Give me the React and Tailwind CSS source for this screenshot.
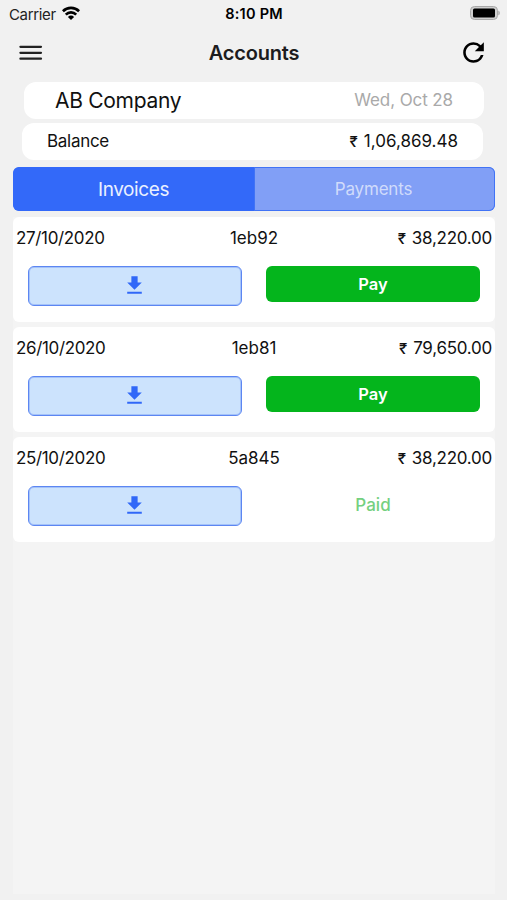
import React, { useState } from 'react';
import { MdRefresh, MdFileDownload } from 'react-icons/md';

const invoices = [
  { id: '1eb92', date: '27/10/2020', amount: '38,220.00', paid: false },
  { id: '1eb81', date: '26/10/2020', amount: '79,650.00', paid: false },
  { id: '5a845', date: '25/10/2020', amount: '38,220.00', paid: true },
];

const StatusBar = () => (
  <div className="grid h-7 grid-cols-3 items-center pl-[9px] pr-[7px] text-black">
    <div className="flex items-center gap-[6px]">
      <span className="text-[15px] leading-none tracking-[-0.35px] text-[#222]">Carrier</span>
      <svg width="18" height="14" viewBox="0 0 18 14" className="-mt-[2px]" fill="none" stroke="currentColor" strokeWidth="2.7">
        <path d="M0.9 5.2a11.5 11.5 0 0 1 16.2 0" />
        <path d="M3.8 8.6a7.4 7.4 0 0 1 10.4 0" />
        <path d="M9 14L5.9 10.9a4.4 4.4 0 0 1 6.2 0z" fill="currentColor" stroke="none" />
      </svg>
    </div>
    <span className="-ml-[1px] text-center text-[14.5px] font-semibold leading-none tracking-[0.25px]">8:10 PM</span>
    <svg className="-mt-[2px] justify-self-end" width="30" height="14" viewBox="0 0 30 14">
      <rect x="0.5" y="0.5" width="27" height="13" rx="4" fill="#cfcfcf" stroke="#a9a9a9" />
      <rect x="3" y="2.5" width="22" height="9" rx="1.5" fill="#000" />
      <path d="M28.3 4.5c2 .8 2 4.2 0 5z" fill="#a9a9a9" />
    </svg>
  </div>
);

const Header = () => (
  <div className="flex h-[49px] items-center justify-between pl-[19px] pr-[18px]">
    <button className="w-[31px]">
      <svg width="24" height="16" viewBox="0 0 24 16" stroke="#222" strokeWidth="2.2" strokeLinecap="round">
        <path d="M1.4 1.8h20.6M1.4 7.8h20.6M1.4 13.7h20.6" />
      </svg>
    </button>
    <h1 className="text-[20px] font-semibold tracking-[-0.2px] text-[#1c1c1e]">Accounts</h1>
    <button>
      <MdRefresh className="size-[31px] text-black" />
    </button>
  </div>
);

const Amount = ({ value }) => (
  <span className="inline-flex items-baseline gap-[6px]">
    <span className="text-[15px] font-medium">₹</span>
    {value}
  </span>
);

const InvoiceCard = ({ invoice }) => (
  <div className="h-[105px] rounded-md bg-white">
    <div className="flex h-[43px] items-center justify-between px-[3px] text-[17px] tracking-[-0.25px] text-[#111]">
      <span className="flex-1 tracking-[-0.35px]">{invoice.date}</span>
      <span className="tracking-normal">{invoice.id}</span>
      <span className="flex-1 text-right">
        <Amount value={invoice.amount} />
      </span>
    </div>
    <div className="flex justify-between px-[15px] pt-[6px]">
      <button className="flex h-10 w-[214px] items-center justify-center rounded-md border border-[#5c86f2] bg-[#cce3fd] pr-[1px] ring-1 ring-inset ring-[#a5c3f9]">
        <MdFileDownload className="-mt-[1px] size-[25px] text-[#3068f8]" />
      </button>
      {invoice.paid ? (
        <div className="flex h-10 w-[214px] items-center justify-center text-[17px] font-medium text-[#74d080]">Paid</div>
      ) : (
        <button className="h-9 w-[214px] rounded-md bg-[#04b51c] pt-[1px] text-[16.5px] font-semibold text-white">
          Pay
        </button>
      )}
    </div>
  </div>
);

const App = () => {
  const [tab, setTab] = useState('invoices');

  const tabClass = (name) =>
    tab === name
      ? 'bg-[#3369f9] text-[19px] tracking-[-0.4px] text-[#eaf0ff]'
      : 'border-[1.5px] border-[#4173f5] bg-[#819ff6] pr-[2px] text-[17px] tracking-[-0.2px] text-[#d0dbfb]';

  return (
    <div className="flex h-[900px] w-[507px] flex-col overflow-hidden bg-[#f1f1f1] font-['Inter','Liberation_Sans',sans-serif]">
      <StatusBar />
      <Header />

      <div className="ml-6 mr-[23px] mt-[5px] flex h-[37px] items-center justify-between rounded-xl bg-white px-[31px]">
        <span className="text-[21px] tracking-[-0.3px] text-[#111]">AB Company</span>
        <span className="text-[17px] tracking-[-0.1px] text-[#a9a9a9]">Wed, Oct 28</span>
      </div>
      <div className="ml-[22px] mr-6 mt-1 flex h-[37px] items-center justify-between rounded-xl bg-white px-[25px] pt-[1px] text-[17px] text-[#111]">
        <span className="tracking-[-0.3px]">Balance</span>
        <Amount value="1,06,869.48" />
      </div>

      <div className="ml-[13px] mr-3 mt-[7px] flex h-11 overflow-hidden rounded-md bg-[#4173f5]">
        <button onClick={() => setTab('invoices')} className={`w-1/2 rounded-l-md pt-[2px] ${tabClass('invoices')}`}>
          Invoices
        </button>
        <button onClick={() => setTab('payments')} className={`w-1/2 rounded-r-md pt-[2px] ${tabClass('payments')}`}>
          Payments
        </button>
      </div>

      <div className="mb-[6px] ml-[13px] mr-3 mt-[6px] flex flex-1 flex-col gap-[5px] bg-[#f4f4f4]">
        {tab === 'invoices' && invoices.map((invoice) => <InvoiceCard key={invoice.id} invoice={invoice} />)}
      </div>
    </div>
  );
};

export default App;
